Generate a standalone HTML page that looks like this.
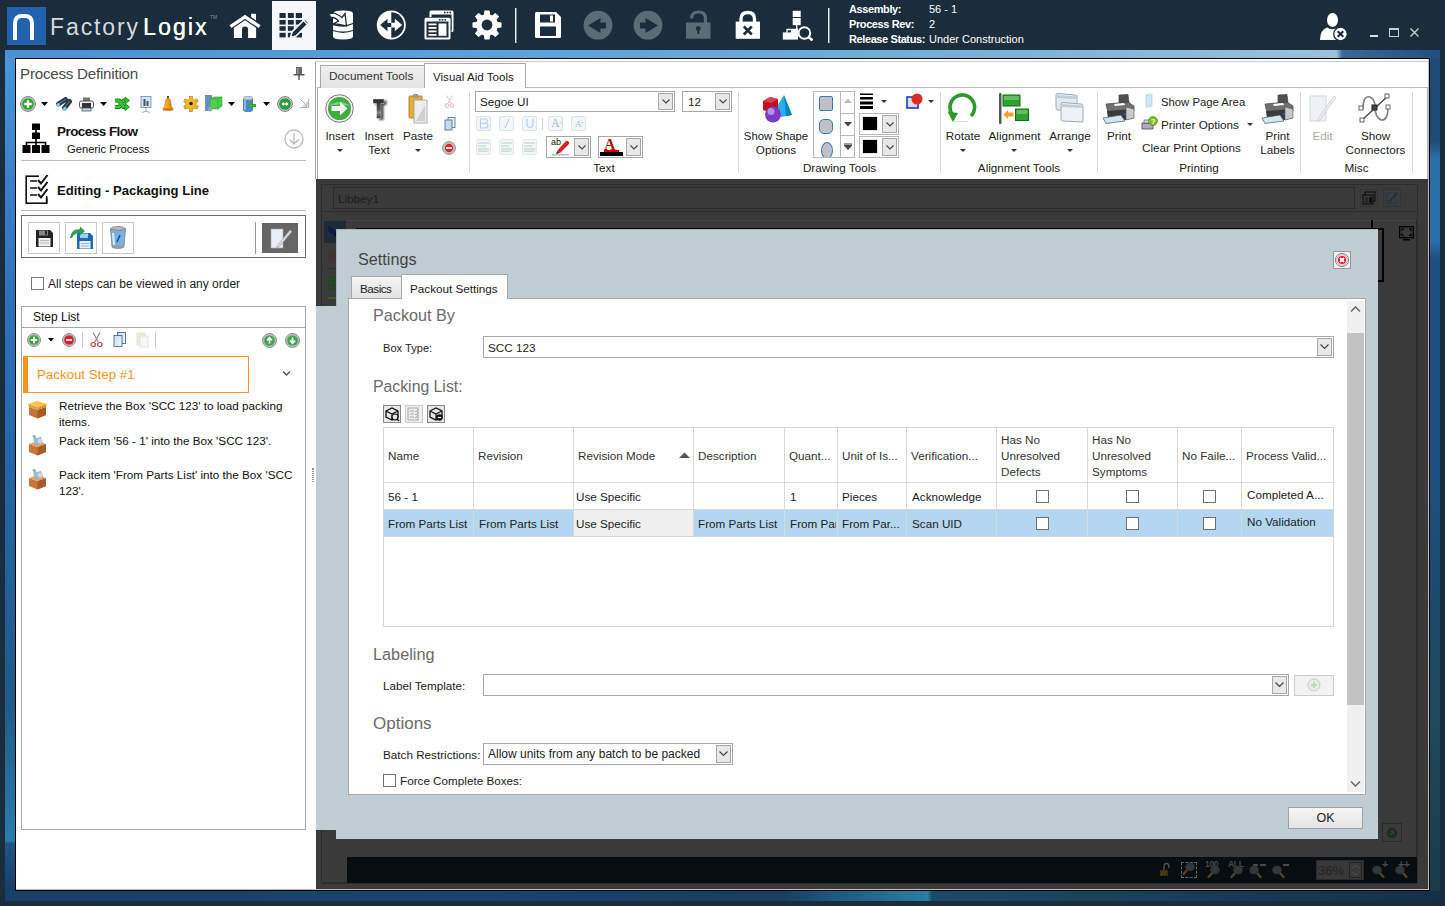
<!DOCTYPE html>
<html><head><meta charset="utf-8">
<style>
*{box-sizing:border-box;margin:0;padding:0}
html,body{width:1445px;height:906px;overflow:hidden;background:#1b2d3c;font-family:"Liberation Sans",sans-serif;font-size:12px;color:#000}
.a{position:absolute}
.t{position:absolute;white-space:nowrap}
</style></head><body>
<!-- blue frame -->
<div class="a" style="left:5px;top:50px;width:1435px;height:851px;background:#1e5585"></div>
<div class="a" style="left:5px;top:50px;width:1435px;height:8px;background:linear-gradient(90deg,#4a90d6 0%,#58a0de 30%,#66a8da 50%,#7ab2d8 70%,#9cc0dc 92.8%,#3a6a98 93.2%,#1f4f80 100%)"></div>
<div class="a" style="left:5px;top:58px;width:10px;height:833px;background:linear-gradient(180deg,#4a96d8 0%,#3a80c8 15%,#2e70b8 30%,#2565a5 50%,#1f5a8a 77%,#2a78a8 92.5%,#2a7aaa 94%,#1e5585 94.3%,#173f68 100%)"></div>
<div class="a" style="left:5px;top:891px;width:1435px;height:10px;background:linear-gradient(90deg,#163f6a 0%,#174470 30%,#173e5e 54%,#1e5a80 58%,#2a7aa0 64%,#2c7ea4 64.3%,#1a4a68 64.6%,#17405a 80%,#143048 100%)"></div>
<div class="a" style="left:1430px;top:58px;width:10px;height:833px;background:linear-gradient(180deg,#1f4a78 0%,#1f4a78 10%,#2a70a8 12%,#2a70a8 22%,#1c5080 24%,#1c5080 50%,#1a4a6a 65%,#1e4a5a 80%,#1a3a48 100%)"></div>
<!-- window border -->
<div class="a" style="left:15px;top:58px;width:1415px;height:833px;border:1px solid #000;background:#fff"></div>
<div class="a" style="left:1428px;top:59px;width:1px;height:831px;background:#bbb"></div>
<div class="a" style="left:16px;top:889px;width:1413px;height:1px;background:#bbb"></div>


<!-- LEFT PANEL -->
<div id="left" class="a" style="left:16px;top:59px;width:299px;height:830px;background:#fff"></div>
<div class="t" style="left:20px;top:64px;font-size:15.2px;line-height:20px;color:#4a4a4a;letter-spacing:-0.25px">Process Definition</div>
<svg class="a" style="left:293px;top:67px" width="12" height="14"><rect x="3" y="0" width="6" height="7" fill="#666"/><rect x="4" y="1" width="1.5" height="6" fill="#999"/><rect x="0.5" y="7" width="11" height="1.5" fill="#555"/><rect x="5.3" y="8" width="1.4" height="5" fill="#555"/></svg>
<!-- toolbar row -->
<svg class="a" style="left:20px;top:96px" width="16" height="16"><circle cx="8.0" cy="8.0" r="7.4" fill="#f6f6f6" stroke="#6a6a6a" stroke-width="0.9"/><circle cx="8.0" cy="8.0" r="6.2" fill="none" stroke="#8a8a8a" stroke-width="0.7"/><circle cx="8.0" cy="8.0" r="5.85" fill="#30a830"/><path d="M8 4.3 V11.7 M4.3 8 H11.7" stroke="#fff" stroke-width="2.3"/></svg>
<svg class="a" style="left:41px;top:102px" width="7" height="4"><path d="M0 0 H7 L3.5 4Z" fill="#000"/></svg>
<svg class="a" style="left:55px;top:97px" width="17" height="14"><path d="M3.5 7 L10.5 2.5 M9.5 11 L14.5 4.5" stroke="#2e3c48" stroke-width="5" stroke-linecap="round"/><path d="M3.5 7 L10.5 2.5 M9.5 11 L14.5 4.5" stroke="#5a6a78" stroke-width="1.2" stroke-linecap="round"/><ellipse cx="3" cy="8" rx="2.1" ry="1.6" fill="#80ccf4" transform="rotate(-35 3 8)"/><ellipse cx="9.5" cy="11.8" rx="2.3" ry="1.6" fill="#80ccf4" transform="rotate(-45 9.5 11.8)"/></svg>
<svg class="a" style="left:79px;top:97px" width="15" height="15"><rect x="4" y="0.5" width="7" height="4" fill="#777"/><rect x="0.5" y="4" width="14" height="7" rx="1.5" fill="#eee" stroke="#555"/><rect x="3" y="6" width="9" height="5" fill="#333"/><rect x="3" y="11" width="9" height="3" fill="#bde" stroke="#555" stroke-width="0.8"/></svg>
<svg class="a" style="left:100px;top:102px" width="7" height="4"><path d="M0 0 H7 L3.5 4Z" fill="#000"/></svg>
<svg class="a" style="left:114px;top:96px" width="16" height="16"><g fill="none" stroke-linejoin="round"><path d="M1 4.5 H5 L9.5 11 H12 M1 11 H5 L6 9.5 M8 6 L9.5 4.5 H12" stroke="#158a15" stroke-width="4.2"/><path d="M1 4.5 H5 L9.5 11 H12 M1 11 H5 L6 9.5 M8 6 L9.5 4.5 H12" stroke="#3cc83c" stroke-width="2.2"/></g><path d="M11 1 L15.5 4.5 L11 8Z M11 7.5 L15.5 11 L11 14.5Z" fill="#3cc83c" stroke="#158a15" stroke-width="0.9"/></svg>
<svg class="a" style="left:140px;top:96px" width="12" height="17"><rect x="1" y="0.5" width="10" height="11" fill="#d7e6f5" stroke="#6a8ab0" stroke-width="0.8"/><rect x="3.5" y="3" width="2" height="7" fill="#456"/><rect x="6.5" y="5" width="2" height="5" fill="#456"/><path d="M6 11.5 V15 L2.5 16.5 M6 15 L9.5 16.5" stroke="#888" stroke-width="0.8" fill="none"/></svg>
<svg class="a" style="left:162px;top:96px" width="12" height="16"><defs><linearGradient id="bellg" x1="0" x2="1"><stop offset="0" stop-color="#f8d040"/><stop offset="0.5" stop-color="#f5a020"/><stop offset="1" stop-color="#d06a10"/></linearGradient></defs><rect x="5" y="0" width="2" height="3" fill="#7a4a20"/><path d="M6 2.5 Q3.3 2.5 3.3 6.5 Q3.3 10.5 1 13 H11 Q8.7 10.5 8.7 6.5 Q8.7 2.5 6 2.5Z" fill="url(#bellg)" stroke="#b86a10" stroke-width="0.6"/><ellipse cx="6" cy="13.5" rx="5.5" ry="1.3" fill="#d87018"/></svg>
<svg class="a" style="left:183px;top:96px" width="16" height="16" viewBox="-8 -8 16 16"><g fill="#f0b020" stroke="#b07a10" stroke-width="0.6"><circle r="5.2"/><rect x="-1.6" y="-7.6" width="3.2" height="3.5"/><rect x="-1.6" y="-7.6" width="3.2" height="3.5" transform="rotate(60)"/><rect x="-1.6" y="-7.6" width="3.2" height="3.5" transform="rotate(120)"/><rect x="-1.6" y="-7.6" width="3.2" height="3.5" transform="rotate(180)"/><rect x="-1.6" y="-7.6" width="3.2" height="3.5" transform="rotate(240)"/><rect x="-1.6" y="-7.6" width="3.2" height="3.5" transform="rotate(300)"/></g><circle r="5" fill="#f5b82a"/><circle cx="0" cy="-0.5" r="1.8" fill="#222"/></svg>
<svg class="a" style="left:205px;top:95px" width="18" height="17"><rect x="0.5" y="0.5" width="6" height="15" fill="#6a8fc8" stroke="#4a6a9a" stroke-width="0.6"/><path d="M5 4 L9 2 H17 V11 L13 14 H5Z" fill="#50d050" stroke="#2a9a2a" stroke-width="0.6"/><path d="M5 4 H13 V14 M13 4 L17 2" fill="none" stroke="#2a9a2a" stroke-width="0.6"/><ellipse cx="5" cy="14" rx="2" ry="2.5" fill="#8aa" /></svg>
<svg class="a" style="left:228px;top:102px" width="7" height="4"><path d="M0 0 H7 L3.5 4Z" fill="#000"/></svg>
<svg class="a" style="left:242px;top:96px" width="15" height="16"><path d="M1 2 Q1 0 6 0 Q11 0 11 2 V14 Q11 16 6 16 Q1 16 1 14Z" fill="#4a8ac8"/><ellipse cx="6" cy="2" rx="5" ry="1.8" fill="#ccc"/><rect x="2" y="4" width="2" height="10" fill="#9cc8f0" opacity="0.7"/><path d="M6 9 L11 6 V8 H14 V11 H11 V13Z" fill="#30b030"/></svg>
<svg class="a" style="left:263px;top:102px" width="7" height="4"><path d="M0 0 H7 L3.5 4Z" fill="#000"/></svg>
<svg class="a" style="left:277px;top:96px" width="16" height="16"><circle cx="8.0" cy="8.0" r="7.4" fill="#f6f6f6" stroke="#6a6a6a" stroke-width="0.9"/><circle cx="8.0" cy="8.0" r="6.2" fill="none" stroke="#8a8a8a" stroke-width="0.7"/><circle cx="8.0" cy="8.0" r="5.85" fill="#2a9a3a"/><path d="M4.5 8 L6.8 5.7 V7.2 H9.2 V5.7 L11.5 8 L9.2 10.3 V8.8 H6.8 V10.3Z" fill="#fff"/></svg>
<svg class="a" style="left:299px;top:98px" width="10" height="10"><path d="M9.5 1 V9.5 H1 M1.5 1.5 L8 8 M4 8 H8 V4" fill="none" stroke="#999" stroke-width="0.8"/></svg>
<!-- process flow -->
<svg class="a" style="left:22px;top:123px" width="30" height="31"><rect x="10" y="0.5" width="8" height="6.5" rx="0.6" fill="#000"/><rect x="10" y="9.5" width="8" height="6.5" rx="0.6" fill="#000"/><path d="M14 6 V10 M14 15 V20 M4.5 23 V19.5 H23.5 V23 M14 19 V23" stroke="#000" stroke-width="1.6" fill="none"/><rect x="0.5" y="22" width="8" height="8" rx="0.6" fill="#000"/><rect x="10" y="22" width="8" height="8" rx="0.6" fill="#000"/><rect x="19.5" y="22" width="8" height="8" rx="0.6" fill="#000"/></svg>
<div class="t" style="left:57px;top:123px;font-size:13.5px;line-height:17px;font-weight:bold;letter-spacing:-0.55px;color:#111">Process Flow</div>
<div class="t" style="left:67px;top:142px;font-size:11.2px;line-height:15px;color:#111">Generic Process</div>
<svg class="a" style="left:284px;top:129px" width="20" height="20"><circle cx="10" cy="10" r="9" fill="none" stroke="#bbb" stroke-width="1.3"/><path d="M10 4 V15 M5.5 10.5 L10 15 L14.5 10.5" fill="none" stroke="#bbb" stroke-width="1.3"/></svg>
<div class="a" style="left:21px;top:160px;width:285px;height:1px;background:#b8b8b8"></div>
<!-- editing -->
<svg class="a" style="left:25px;top:174px" width="28" height="31"><rect x="1.2" y="2.2" width="20.5" height="27" fill="none" stroke="#111" stroke-width="1.6"/><rect x="14" y="0" width="14" height="24" fill="#fff"/><path d="M21.7 22 V29" stroke="#111" stroke-width="1.6"/><path d="M5 7 H12 M5 14 H12 M5 21 H12" stroke="#111" stroke-width="1.4"/><path d="M13 6 L16 9.5 L22.5 1 M13 13 L16 16.5 L22.5 8 M13 20 L16 23.5 L22.5 15" fill="none" stroke="#111" stroke-width="2"/></svg>
<div class="t" style="left:57px;top:182px;font-size:13.1px;line-height:17px;font-weight:bold;color:#111;letter-spacing:0px">Editing - Packaging Line</div>
<div class="a" style="left:21px;top:210px;width:285px;height:1px;background:#b8b8b8"></div>
<!-- button group -->
<div class="a" style="left:21px;top:215px;width:285px;height:43px;border:1px solid #6a6a6a"></div>
<div class="a" style="left:28px;top:222px;width:32px;height:32px;border:1px solid #c8c8c8;background:#fff"></div>
<div class="a" style="left:65px;top:222px;width:32px;height:32px;border:1px solid #c8c8c8;background:#fff"></div>
<div class="a" style="left:102px;top:222px;width:32px;height:32px;border:1px solid #c8c8c8;background:#fff"></div>
<svg class="a" style="left:35px;top:229px" width="19" height="19"><path d="M1 1 H15 L18 4 V18 H1Z" fill="#222"/><rect x="4" y="1.5" width="9" height="5" fill="#888"/><rect x="10" y="2" width="2" height="3.5" fill="#222"/><rect x="3.5" y="9" width="12" height="8.5" fill="#f0f0f0"/><path d="M5 11.5 H14 M5 14 H14" stroke="#aaa" stroke-width="0.8"/></svg>
<svg class="a" style="left:68px;top:226px" width="28" height="25"><path d="M9 7 H22 L25 10 V23 H9Z" fill="#1a6bb5"/><rect x="12" y="7.5" width="8" height="4.5" fill="#9fd0f5"/><rect x="11.5" y="15" width="11" height="7.5" fill="#eef"/><path d="M13 17.5 H21 M13 20 H21" stroke="#7aa" stroke-width="0.8"/><path d="M2 12 Q3 3 12 3 V0.5 L17 5 L12 9.5 V7 Q6 7 4 12Z" fill="#2ea04a"/></svg>
<svg class="a" style="left:109px;top:226px" width="18" height="24"><ellipse cx="9" cy="3" rx="7.5" ry="2.5" fill="#bbb" stroke="#777" stroke-width="0.7"/><path d="M1.5 3 L3 21 Q9 24 15 21 L16.5 3 Q9 6 1.5 3Z" fill="#7ab0e0" stroke="#777" stroke-width="0.7"/><path d="M4 7 L5 19" stroke="#d8ecfa" stroke-width="2"/><path d="M8 16 L11 9" stroke="#1a4a9a" stroke-width="1.5"/><ellipse cx="9" cy="21" rx="6" ry="1.8" fill="#999"/></svg>
<div class="a" style="left:255px;top:222px;width:1px;height:32px;background:#999"></div>
<div class="a" style="left:262px;top:223px;width:36px;height:30px;background:#666"></div>
<svg class="a" style="left:268px;top:227px" width="26" height="22"><path d="M3 2 H15 V21 H3Z" fill="#e8eef5" stroke="#aab" stroke-width="0.6"/><path d="M9 19 L22 3 L24 4.5 L11 20 L8.5 21Z" fill="#ddd" stroke="#999" stroke-width="0.6"/></svg>
<!-- checkbox -->
<div class="a" style="left:31px;top:277px;width:13px;height:13px;border:1px solid #777;background:#fff"></div>
<div class="t" style="left:48px;top:277px;font-size:12px;line-height:15px;color:#222">All steps can be viewed in any order</div>
<!-- step list -->
<div class="a" style="left:21px;top:306px;width:285px;height:524px;border:1px solid #a8a8a8;background:#fff"></div>
<div class="a" style="left:22px;top:327px;width:283px;height:1px;background:#a8a8a8"></div>
<div class="t" style="left:33px;top:309px;font-size:12px;line-height:16px;color:#111">Step List</div>
<svg class="a" style="left:27px;top:333px" width="14" height="14"><circle cx="7.0" cy="7.0" r="6.4" fill="#f6f6f6" stroke="#6a6a6a" stroke-width="0.9"/><circle cx="7.0" cy="7.0" r="5.2" fill="none" stroke="#8a8a8a" stroke-width="0.7"/><circle cx="7.0" cy="7.0" r="4.85" fill="#30a830"/><path d="M7 3.8 V10.2 M3.8 7 H10.2" stroke="#fff" stroke-width="2"/></svg>
<svg class="a" style="left:48px;top:338px" width="6" height="4"><path d="M0 0 H6 L3 3.5Z" fill="#000"/></svg>
<svg class="a" style="left:62px;top:333px" width="14" height="14"><circle cx="7.0" cy="7.0" r="6.4" fill="#f6f6f6" stroke="#6a6a6a" stroke-width="0.9"/><circle cx="7.0" cy="7.0" r="5.2" fill="none" stroke="#8a8a8a" stroke-width="0.7"/><circle cx="7.0" cy="7.0" r="4.85" fill="#e01e30"/><path d="M4 7 H10" stroke="#fff" stroke-width="1.8"/></svg>
<div class="a" style="left:82px;top:332px;width:1px;height:16px;background:#ccc"></div>
<svg class="a" style="left:90px;top:332px" width="13" height="16"><path d="M3 0.5 L8.3 10 M10 0.5 L4.7 10" stroke="#8a8a8a" stroke-width="1.2"/><ellipse cx="3.2" cy="12.5" rx="2.2" ry="2" fill="none" stroke="#c04040" stroke-width="1.2"/><ellipse cx="9.8" cy="12.5" rx="2.2" ry="2" fill="none" stroke="#c04040" stroke-width="1.2"/></svg>
<svg class="a" style="left:113px;top:332px" width="14" height="16"><defs><linearGradient id="cpg" x1="0" y1="0" x2="1" y2="1"><stop offset="0" stop-color="#c8e0f0"/><stop offset="1" stop-color="#f0f6fa"/></linearGradient></defs><rect x="4.5" y="0.5" width="8" height="11" fill="url(#cpg)" stroke="#4a6a8a" stroke-width="0.9"/><rect x="1" y="3.5" width="8" height="11" fill="url(#cpg)" stroke="#4a6a8a" stroke-width="0.9"/></svg>
<svg class="a" style="left:136px;top:332px" width="13" height="16"><rect x="1" y="1" width="8" height="12" fill="#f5ebd0" stroke="#ddd" stroke-width="0.8"/><rect x="4" y="4" width="8" height="11" fill="#f8f8f8" stroke="#ddd" stroke-width="0.8"/></svg>
<div class="a" style="left:155px;top:332px;width:1px;height:16px;background:#ccc"></div>
<svg class="a" style="left:262px;top:333px" width="15" height="15"><circle cx="7.5" cy="7.5" r="6.9" fill="#f6f6f6" stroke="#6a6a6a" stroke-width="0.9"/><circle cx="7.5" cy="7.5" r="5.7" fill="none" stroke="#8a8a8a" stroke-width="0.7"/><circle cx="7.5" cy="7.5" r="5.35" fill="#3aa64a"/><path d="M7.5 10.5 V4.8 M5 7.3 L7.5 4.8 L10 7.3" stroke="#fff" stroke-width="1.7" fill="none"/></svg>
<svg class="a" style="left:285px;top:333px" width="15" height="15"><circle cx="7.5" cy="7.5" r="6.9" fill="#f6f6f6" stroke="#6a6a6a" stroke-width="0.9"/><circle cx="7.5" cy="7.5" r="5.7" fill="none" stroke="#8a8a8a" stroke-width="0.7"/><circle cx="7.5" cy="7.5" r="5.35" fill="#3aa64a"/><path d="M7.5 4.5 V10.2 M5 7.7 L7.5 10.2 L10 7.7" stroke="#fff" stroke-width="1.7" fill="none"/></svg>
<!-- packout step -->
<div class="a" style="left:23px;top:356px;width:226px;height:37px;border:1px solid #f7941d;border-left:5px solid #f7941d;background:#fff"></div>
<div class="t" style="left:37px;top:366px;font-size:13.3px;line-height:17px;color:#f7941d">Packout Step #1</div>
<svg class="a" style="left:282px;top:370px" width="9" height="7"><path d="M1 1.5 L4.5 5 L8 1.5" fill="none" stroke="#555" stroke-width="1.5"/></svg>
<svg class="a" style="left:27px;top:400px" width="21" height="19"><path d="M2 7 L10.5 10 L19 7 V15 L10.5 18.5 L2 15Z" fill="#c8743a"/><path d="M10.5 10 V18.5 L19 15 V7Z" fill="#a85a28"/><path d="M1 4 L10 1 L20 4 L11 7.5Z" fill="#f6c54a"/><path d="M1 4 L2 7 L10.5 10 L11 7.5Z" fill="#e0a030"/><path d="M20 4 L19 7 L10.5 10 L11 7.5Z" fill="#d89028"/></svg><div class="t" style="left:59px;top:398px;font-size:11.7px;line-height:15.5px;color:#111">Retrieve the Box 'SCC 123' to load packing<br>items.</div>
<svg class="a" style="left:27px;top:435px" width="21" height="21"><path d="M2 9 L10.5 12 L19 9 V17 L10.5 20.5 L2 17Z" fill="#c8743a"/><path d="M10.5 12 V20.5 L19 17 V9Z" fill="#a85a28"/><path d="M2 9 L10.5 6 L19 9 L10.5 12Z" fill="#e0a060"/><path d="M6 1 L9 3 L14 2 L16 8 L10 10 L7 8Z" fill="#9ab8d0"/><path d="M5 1 L8 0 L9 3Z" fill="#5a8"/><circle cx="13" cy="6" r="2.5" fill="#c8d8e8"/></svg><div class="t" style="left:59px;top:433px;font-size:11.7px;line-height:15.5px;color:#111">Pack item '56 - 1' into the Box 'SCC 123'.</div>
<svg class="a" style="left:27px;top:469px" width="21" height="21"><path d="M2 9 L10.5 12 L19 9 V17 L10.5 20.5 L2 17Z" fill="#c8743a"/><path d="M10.5 12 V20.5 L19 17 V9Z" fill="#a85a28"/><path d="M2 9 L10.5 6 L19 9 L10.5 12Z" fill="#e0a060"/><path d="M6 1 L9 3 L14 2 L16 8 L10 10 L7 8Z" fill="#9ab8d0"/><path d="M5 1 L8 0 L9 3Z" fill="#5a8"/><circle cx="13" cy="6" r="2.5" fill="#c8d8e8"/></svg><div class="t" style="left:59px;top:467px;font-size:11.7px;line-height:15.5px;color:#111">Pack item 'From Parts List' into the Box 'SCC<br>123'.</div>
<div class="a" style="left:312px;top:468px;width:2px;height:14px;border-left:1px dotted #999;border-right:1px dotted #999"></div>
<!-- RIGHT AREA -->

<!-- RIBBON -->
<div id="ribbon" class="a" style="left:315px;top:61px;width:1113px;height:118px;border-left:1px solid #a8a8a8;border-top:1px solid #c8c8c8;background:#fff"></div>
<div class="a" style="left:317px;top:87px;width:1111px;height:92px;border-left:1px solid #a8a8a8;border-top:1px solid #b8b8b8;background:#fff"></div>
<div class="a" style="left:320px;top:65px;width:105px;height:23px;border:1px solid #a8a8a8;border-bottom:none;background:linear-gradient(#efefef,#e4e4e4)"></div>
<div class="t" style="left:329px;top:69px;font-size:11.8px;line-height:15px;color:#333">Document Tools</div>
<div class="a" style="left:424px;top:63px;width:102px;height:25px;border:1px solid #a8a8a8;border-bottom:none;background:#fff"></div>
<div class="t" style="left:433px;top:69px;font-size:11.6px;line-height:15px;color:#222">Visual Aid Tools</div>
<!-- insert -->
<svg class="a" style="left:325px;top:94px" width="29" height="29"><circle cx="14.5" cy="14.5" r="13.8" fill="#f2f2f2" stroke="#777" stroke-width="1"/><circle cx="14.5" cy="14.5" r="11.5" fill="#3fae3f"/><path d="M3.5 12 Q14.5 4 25.5 12 Q14.5 9 3.5 12Z" fill="#8ed88e" opacity="0.8"/><path d="M6.5 12 H15 V7.5 L22.5 14.5 L15 21.5 V17 H6.5Z" fill="#f4f4f4"/></svg>
<div class="t" style="left:280px;top:129px;width:120px;text-align:center;font-size:11.7px;line-height:14px;color:#222">Insert</div>
<svg class="a" style="left:337px;top:149px" width="6" height="4"><path d="M0 0 H6 L3 3Z" fill="#333"/></svg>
<svg class="a" style="left:372px;top:97px" width="20" height="27"><defs><filter id="tblur" x="-50%" y="-50%" width="200%" height="200%"><feGaussianBlur stdDeviation="1.3"/></filter><linearGradient id="tg" x1="0" y1="0" x2="0" y2="1"><stop offset="0" stop-color="#2a2a2a"/><stop offset="0.55" stop-color="#555"/><stop offset="0.7" stop-color="#888"/><stop offset="1" stop-color="#333"/></linearGradient></defs><path d="M3.5 3.5 H14.5 V8 H11.5 V23 H7 V8 H3.5Z" fill="#000" opacity="0.75" filter="url(#tblur)"/><path d="M1 2 H12 V6.5 H9 V21.5 H4.5 V6.5 H1Z" fill="url(#tg)" stroke="#fff" stroke-width="0.4"/></svg>
<div class="t" style="left:319px;top:129px;width:120px;text-align:center;font-size:11.7px;line-height:14px;color:#222">Insert</div>
<div class="t" style="left:319px;top:143px;width:120px;text-align:center;font-size:11.7px;line-height:14px;color:#222">Text</div>
<svg class="a" style="left:408px;top:93px" width="20" height="31"><rect x="1" y="3" width="13" height="22" rx="1" fill="#e8b030" stroke="#a07010" stroke-width="0.8"/><rect x="5" y="1" width="5" height="4" fill="#999"/><path d="M6 7 H19 V30 H6Z" fill="#eee" stroke="#999" stroke-width="0.8"/><path d="M8 28 L17 12 V28Z" fill="#d0d0d0"/></svg>
<div class="t" style="left:358px;top:129px;width:120px;text-align:center;font-size:11.7px;line-height:14px;color:#222">Paste</div>
<svg class="a" style="left:415px;top:149px" width="6" height="4"><path d="M0 0 H6 L3 3Z" fill="#333"/></svg>
<svg class="a" style="left:444px;top:95px" width="11" height="13"><path d="M2.5 0.5 L7 8.3 M8.5 0.5 L4 8.3" stroke="#c4c4c4" stroke-width="0.9"/><circle cx="3" cy="10.5" r="1.8" fill="none" stroke="#e0a0a0" stroke-width="0.8"/><circle cx="8" cy="10.5" r="1.8" fill="none" stroke="#e0a0a0" stroke-width="0.8"/></svg>
<svg class="a" style="left:444px;top:117px" width="12" height="14"><rect x="4" y="0.5" width="7" height="10" fill="#e0ecf6" stroke="#5a7a9a" stroke-width="0.9"/><rect x="1" y="3" width="7" height="10" fill="#c5d8ec" stroke="#5a7a9a" stroke-width="0.9"/></svg>
<svg class="a" style="left:442px;top:141px" width="14" height="14"><circle cx="7" cy="7" r="6.3" fill="#f4f4f4" stroke="#777" stroke-width="1"/><circle cx="7" cy="7" r="5" fill="none" stroke="#888" stroke-width="0.7"/><circle cx="7" cy="7" r="4.2" fill="#e01e30"/><path d="M4 7 H10" stroke="#fff" stroke-width="1.8"/></svg>
<div class="a" style="left:469px;top:92px;width:1px;height:81px;background:#d8d8d8"></div>
<!-- text group -->
<div class="a" style="left:475px;top:91px;width:200px;height:21px;border:1px solid #a8a8a8;background:#fff"></div>
<div class="t" style="left:480px;top:94px;font-size:11.7px;line-height:15px;color:#222">Segoe UI</div>
<div class="a" style="left:658px;top:93px;width:15px;height:17px;border:1px solid #a8a8a8;background:#e8e8e8"></div><svg class="a" style="left:661.5px;top:99.0px" width="8" height="5"><path d="M0.5 0.5 L4 4 L7.5 0.5" fill="none" stroke="#444" stroke-width="1.1"/></svg>
<div class="a" style="left:682px;top:91px;width:50px;height:21px;border:1px solid #a8a8a8;background:#fff"></div>
<div class="t" style="left:688px;top:94px;font-size:11.7px;line-height:15px;color:#222">12</div>
<div class="a" style="left:715px;top:93px;width:15px;height:17px;border:1px solid #a8a8a8;background:#e8e8e8"></div><svg class="a" style="left:718.5px;top:99.0px" width="8" height="5"><path d="M0.5 0.5 L4 4 L7.5 0.5" fill="none" stroke="#444" stroke-width="1.1"/></svg>
<div class="a" style="left:476px;top:116px;width:15px;height:15px;border:1px solid #dde3ea;border-radius:2px;background:#f4f7fa"></div>
<div class="a" style="left:499px;top:116px;width:15px;height:15px;border:1px solid #dde3ea;border-radius:2px;background:#f4f7fa"></div>
<div class="a" style="left:522px;top:116px;width:15px;height:15px;border:1px solid #dde3ea;border-radius:2px;background:#f4f7fa"></div>
<div class="a" style="left:548px;top:116px;width:15px;height:15px;border:1px solid #dde3ea;border-radius:2px;background:#f4f7fa"></div>
<div class="a" style="left:571px;top:116px;width:15px;height:15px;border:1px solid #dde3ea;border-radius:2px;background:#f4f7fa"></div>
<svg class="a" style="left:479px;top:118px" width="10" height="11"><path d="M1.5 1 H6 Q8.5 1 8.5 3 Q8.5 5 6 5.2 Q9 5.5 9 7.7 Q9 10 6 10 H1.5Z M1.5 5.2 H6" fill="none" stroke="#b4cceb" stroke-width="1.1"/></svg>
<svg class="a" style="left:502px;top:118px" width="10" height="11"><path d="M7 1 L3 10" stroke="#b4cceb" stroke-width="1.1"/></svg>
<svg class="a" style="left:525px;top:118px" width="10" height="11"><path d="M2 1 V6 Q2 9.5 5 9.5 Q8 9.5 8 6 V1" fill="none" stroke="#b4cceb" stroke-width="1.2"/></svg>
<div class="a" style="left:542px;top:118px;width:1px;height:12px;background:#ccc"></div>
<div class="t" style="left:551px;top:116px;font-size:12px;line-height:14px;color:#a8b4c0;font-family:'Liberation Serif',serif">A<span style="font-size:6px;vertical-align:top">^</span></div>
<div class="t" style="left:575px;top:118px;font-size:9px;line-height:12px;color:#a8b4c0;font-family:'Liberation Serif',serif">A<span style="font-size:6px;vertical-align:top">ˇ</span></div>
<div class="a" style="left:476px;top:139px;width:15px;height:16px;border:1px solid #e3e8e3;border-radius:2px;background:#f4f7f4"></div>
<svg class="a" style="left:478px;top:142px" width="11" height="10"><path d="M0 1 H11 M0 4 H8 M0 7 H11 M0 9.5 H9" stroke="#b8cce0" stroke-width="1"/><rect x="0" y="6" width="11" height="4" fill="#cfe6cf" opacity="0.6"/></svg>
<div class="a" style="left:499px;top:139px;width:15px;height:16px;border:1px solid #e3e8e3;border-radius:2px;background:#f4f7f4"></div>
<svg class="a" style="left:501px;top:142px" width="11" height="10"><path d="M0 1 H11 M0 4 H8 M0 7 H11 M0 9.5 H9" stroke="#b8cce0" stroke-width="1"/><rect x="0" y="6" width="11" height="4" fill="#cfe6cf" opacity="0.6"/></svg>
<div class="a" style="left:522px;top:139px;width:15px;height:16px;border:1px solid #e3e8e3;border-radius:2px;background:#f4f7f4"></div>
<svg class="a" style="left:524px;top:142px" width="11" height="10"><path d="M0 1 H11 M0 4 H8 M0 7 H11 M0 9.5 H9" stroke="#b8cce0" stroke-width="1"/><rect x="0" y="6" width="11" height="4" fill="#cfe6cf" opacity="0.6"/></svg>
<div class="a" style="left:546px;top:136px;width:45px;height:22px;border:1px solid #a8a8a8;background:#fff"></div>
<div class="t" style="left:551px;top:137px;font-size:9px;line-height:10px;color:#111">ab</div>
<svg class="a" style="left:551px;top:139px" width="20" height="17"><path d="M6 12 L14 3 Q16 1 17.5 2.5 Q19 4 17 6 L9 14Z" fill="#e02020"/><path d="M6 12 L9 14 L5 15Z" fill="#333"/><rect x="1" y="15" width="17" height="1.5" fill="#bbb"/></svg>
<div class="a" style="left:574px;top:138px;width:15px;height:18px;border:1px solid #a8a8a8;background:#e8e8e8"></div><svg class="a" style="left:577.5px;top:144.5px" width="8" height="5"><path d="M0.5 0.5 L4 4 L7.5 0.5" fill="none" stroke="#444" stroke-width="1.1"/></svg>
<div class="a" style="left:598px;top:136px;width:45px;height:22px;border:1px solid #a8a8a8;background:#fff"></div>
<div class="t" style="left:604px;top:137px;font-size:16px;line-height:16px;color:#b01010;font-weight:bold;font-family:'Liberation Serif',serif">A</div>
<div class="a" style="left:600px;top:152px;width:23px;height:4px;background:#000"></div>
<div class="a" style="left:604px;top:150px;width:15px;height:2px;background:#c00"></div>
<div class="a" style="left:626px;top:138px;width:15px;height:18px;border:1px solid #a8a8a8;background:#e8e8e8"></div><svg class="a" style="left:629.5px;top:144.5px" width="8" height="5"><path d="M0.5 0.5 L4 4 L7.5 0.5" fill="none" stroke="#444" stroke-width="1.1"/></svg>
<div class="t" style="left:544px;top:161px;width:120px;text-align:center;font-size:11.7px;line-height:14px;color:#222">Text</div>
<div class="a" style="left:738px;top:92px;width:1px;height:81px;background:#d8d8d8"></div>
<svg class="a" style="left:761px;top:95px" width="32" height="29"><path d="M14 14 L23 0 L31 20 L20 22Z" fill="#2ab0e8"/><path d="M23 0 L31 20 L25 21Z" fill="#1080c0"/><path d="M2 6 L9 2 L17 4 V14 L10 18 L2 15Z" fill="#c01020"/><path d="M2 6 L9 2 L17 4 L10 8Z" fill="#e04050"/><circle cx="12" cy="19.5" r="8" fill="#7a3ac8"/><circle cx="10" cy="16.5" r="3.5" fill="#c8a8f0" opacity="0.8"/></svg>
<div class="t" style="left:716px;top:129px;width:120px;text-align:center;font-size:11.35px;line-height:14px;color:#222">Show Shape</div>
<div class="t" style="left:716px;top:143px;width:120px;text-align:center;font-size:11.7px;line-height:14px;color:#222">Options</div>
<div class="a" style="left:813px;top:91px;width:42px;height:67px;border:1px solid #b8b8b8;background:#fff"></div>
<div class="a" style="left:840px;top:91px;width:1px;height:67px;background:#b8b8b8"></div>
<div class="a" style="left:840px;top:113px;width:15px;height:1px;background:#b8b8b8"></div>
<div class="a" style="left:840px;top:135px;width:15px;height:1px;background:#b8b8b8"></div>
<div class="a" style="left:819px;top:96px;width:14px;height:15px;border:1.5px solid #3a78c0;border-radius:2px;background:#c0c0c8"></div>
<div class="a" style="left:819px;top:119px;width:14px;height:15px;border:1.5px solid #3a78c0;border-radius:5px;background:#c0c0c8"></div>
<div class="a" style="left:814px;top:136px;width:26px;height:21px;overflow:hidden"><div class="a" style="left:7px;top:6px;width:12px;height:17px;border:1.5px solid #3a78c0;border-radius:50%;background:#c0c0c8"></div></div>
<svg class="a" style="left:844px;top:98px" width="8" height="5"><path d="M0 5 L4 0.5 L8 5Z" fill="#bbb"/></svg>
<svg class="a" style="left:844px;top:122px" width="8" height="5"><path d="M0 0 H8 L4 4.5Z" fill="#444"/></svg>
<svg class="a" style="left:844px;top:143px" width="8" height="7"><path d="M0 0 H8 M0 2 H8 L4 6.5Z" stroke="#444" stroke-width="1" fill="#444"/></svg>
<svg class="a" style="left:860px;top:93px" width="14" height="16"><rect x="0" y="0.5" width="13" height="1.5" fill="#000"/><rect x="0" y="4" width="13" height="2.5" fill="#000"/><rect x="0" y="8.5" width="13" height="3" fill="#000"/><rect x="0" y="13" width="13" height="3" fill="#000"/></svg>
<svg class="a" style="left:881px;top:100px" width="6" height="4"><path d="M0 0 H6 L3 3Z" fill="#333"/></svg>
<svg class="a" style="left:906px;top:93px" width="17" height="16"><rect x="1" y="4" width="11" height="11" fill="#dde" stroke="#1a40b0" stroke-width="1.6"/><circle cx="11" cy="6" r="5.5" fill="#e02a20"/></svg>
<svg class="a" style="left:928px;top:100px" width="6" height="4"><path d="M0 0 H6 L3 3Z" fill="#333"/></svg>
<div class="a" style="left:859px;top:113px;width:40px;height:22px;border:1px solid #b8b8b8;background:#fff"></div>
<div class="a" style="left:863px;top:117px;width:14px;height:13px;background:#000;box-shadow:0 0 1px #666"></div>
<div class="a" style="left:859px;top:136px;width:40px;height:22px;border:1px solid #b8b8b8;background:#fff"></div>
<div class="a" style="left:863px;top:140px;width:14px;height:13px;background:#000;box-shadow:0 0 1px #666"></div>
<div class="a" style="left:882px;top:115px;width:15px;height:18px;border:1px solid #a8a8a8;background:#e8e8e8"></div><svg class="a" style="left:885.5px;top:121.5px" width="8" height="5"><path d="M0.5 0.5 L4 4 L7.5 0.5" fill="none" stroke="#444" stroke-width="1.1"/></svg>
<div class="a" style="left:882px;top:138px;width:15px;height:18px;border:1px solid #a8a8a8;background:#e8e8e8"></div><svg class="a" style="left:885.5px;top:144.5px" width="8" height="5"><path d="M0.5 0.5 L4 4 L7.5 0.5" fill="none" stroke="#444" stroke-width="1.1"/></svg>
<div class="t" style="left:779.5px;top:161px;width:120px;text-align:center;font-size:11.7px;line-height:14px;color:#222">Drawing Tools</div>
<div class="a" style="left:940px;top:92px;width:1px;height:81px;background:#d8d8d8"></div>
<svg class="a" style="left:947px;top:93px" width="31" height="30"><path d="M4.65 20.35 A12.3 12.3 0 1 1 24 22.9" fill="none" stroke="#2a9a2a" stroke-width="3.6"/><path d="M0.5 18.5 L11 20 L6 29Z" fill="#2a9a2a"/><path d="M7 28.5 H21" stroke="#ddd" stroke-width="1"/></svg>
<div class="t" style="left:903px;top:129px;width:120px;text-align:center;font-size:11.7px;line-height:14px;color:#222">Rotate</div>
<svg class="a" style="left:960px;top:149px" width="6" height="4"><path d="M0 0 H6 L3 3Z" fill="#333"/></svg>
<svg class="a" style="left:998px;top:93px" width="32" height="31"><rect x="1" y="0" width="2.5" height="31" rx="1" fill="#555"/><rect x="5" y="2" width="17" height="11" fill="#30a030" stroke="#1a6a1a" stroke-width="1"/><rect x="6" y="3" width="15" height="4" fill="#60c060"/><rect x="17.5" y="16" width="13" height="11.5" fill="#30a030" stroke="#1a6a1a" stroke-width="1"/><rect x="18.5" y="17" width="11" height="4" fill="#60c060"/><path d="M5.5 21.5 L10 17 V19.5 H15.5 V23.5 H10 V26Z" fill="#f5a020"/></svg>
<div class="t" style="left:954.5px;top:129px;width:120px;text-align:center;font-size:11.7px;line-height:14px;color:#222">Alignment</div>
<svg class="a" style="left:1011px;top:149px" width="6" height="4"><path d="M0 0 H6 L3 3Z" fill="#333"/></svg>
<svg class="a" style="left:1055px;top:93px" width="30" height="32"><path d="M1 2 Q1 0.5 3 0.5 L20 2 Q22 2 22 4 V18 L3 17 Q1 17 1 15Z" fill="#e4ecf2" stroke="#9aaab8"/><path d="M2 2 L21 3.5 V6 L2 5Z" fill="#c0ccd8"/><path d="M6 11 Q6 9.5 8 9.5 L26 11 Q28 11 28 13 V29 L8 28 Q6 28 6 26Z" fill="#eef2f6" stroke="#9aaab8"/><path d="M7 11 L27 12.5 V15 L7 14Z" fill="#c0ccd8"/></svg>
<div class="t" style="left:1010px;top:129px;width:120px;text-align:center;font-size:11.7px;line-height:14px;color:#222">Arrange</div>
<svg class="a" style="left:1067px;top:149px" width="6" height="4"><path d="M0 0 H6 L3 3Z" fill="#333"/></svg>
<div class="t" style="left:959px;top:161px;width:120px;text-align:center;font-size:11.7px;line-height:14px;color:#222">Alignment Tools</div>
<div class="a" style="left:1097px;top:92px;width:1px;height:81px;background:#d8d8d8"></div>
<svg class="a" style="left:1102px;top:94px" width="33" height="30"><path d="M17 1 L26 0.5 L27 9 L17 9.5Z" fill="#505050" stroke="#333" stroke-width="0.6"/><path d="M4 10 L26 8 L32 12 L32 17 L6 19Z" fill="#707070" stroke="#444" stroke-width="0.7"/><path d="M12 10 L22 9 L23 11 L13 12Z" fill="#fff"/><path d="M5 17 L32 15 V24 L24 26 L6 25Z" fill="#3a3a3a"/><path d="M24 13 L32 15 V24 L24 26Z" fill="#c8c8c8" stroke="#555" stroke-width="0.6"/><circle cx="23" cy="20" r="0.9" fill="#2060ff"/><path d="M1 24 L19 21 L23 27 L4 29.5Z" fill="#cde8f0" stroke="#555" stroke-width="0.7"/></svg>
<div class="t" style="left:1059px;top:129px;width:120px;text-align:center;font-size:11.7px;line-height:14px;color:#222">Print</div>
<svg class="a" style="left:1145px;top:94px" width="10" height="14"><path d="M1 1 L7 0 V12 L1 13Z" fill="#cfe4f8" stroke="#9cc" stroke-width="0.6"/></svg>
<div class="t" style="left:1161px;top:95px;font-size:11.3px;line-height:14px;color:#222">Show Page Area</div>
<svg class="a" style="left:1141px;top:116px" width="17" height="15"><path d="M1 7 H12 V13 H1Z" fill="#aac" stroke="#446" stroke-width="0.8"/><rect x="3" y="4" width="7" height="3" fill="#ddd" stroke="#446" stroke-width="0.6"/><circle cx="12" cy="5" r="4.5" fill="#80c020" stroke="#4a7a10" stroke-width="0.6"/><text x="10" y="8" font-size="7" fill="#fff" font-family="Liberation Sans" font-weight="bold">?</text></svg>
<div class="t" style="left:1161px;top:118px;font-size:11.7px;line-height:14px;color:#222">Printer Options</div>
<svg class="a" style="left:1247px;top:123px" width="6" height="4"><path d="M0 0 H6 L3 3Z" fill="#333"/></svg>
<div class="t" style="left:1142px;top:141px;font-size:11.7px;line-height:14px;color:#222">Clear Print Options</div>
<svg class="a" style="left:1261px;top:94px" width="33" height="30"><path d="M17 1 L26 0.5 L27 9 L17 9.5Z" fill="#505050" stroke="#333" stroke-width="0.6"/><path d="M4 10 L26 8 L32 12 L32 17 L6 19Z" fill="#707070" stroke="#444" stroke-width="0.7"/><path d="M12 10 L22 9 L23 11 L13 12Z" fill="#fff"/><path d="M5 17 L32 15 V24 L24 26 L6 25Z" fill="#3a3a3a"/><path d="M24 13 L32 15 V24 L24 26Z" fill="#c8c8c8" stroke="#555" stroke-width="0.6"/><circle cx="23" cy="20" r="0.9" fill="#2060ff"/><path d="M1 24 L19 21 L23 27 L4 29.5Z" fill="#cde8f0" stroke="#555" stroke-width="0.7"/></svg>
<div class="t" style="left:1217.5px;top:129px;width:120px;text-align:center;font-size:11.7px;line-height:14px;color:#222">Print</div>
<div class="t" style="left:1217.5px;top:143px;width:120px;text-align:center;font-size:11.7px;line-height:14px;color:#222">Labels</div>
<div class="t" style="left:1139px;top:161px;width:120px;text-align:center;font-size:11.7px;line-height:14px;color:#222">Printing</div>
<div class="a" style="left:1300px;top:92px;width:1px;height:81px;background:#d8d8d8"></div>
<svg class="a" style="left:1308px;top:93px" width="29" height="30"><path d="M2 3 H18 V28 H2Z" fill="#eef2f6" stroke="#d0d8e0"/><path d="M10 26 L26 3 L28 4.5 L12 27 L9 28Z" fill="#f0f0f0" stroke="#ccc" stroke-width="0.8"/></svg>
<div class="t" style="left:1262.5px;top:129px;width:120px;text-align:center;font-size:11.7px;line-height:14px;color:#aaa">Edit</div>
<svg class="a" style="left:1358px;top:93px" width="34" height="31"><path d="M5 16 Q5 2 12 4 Q17 6 17 14 Q17 24 23 27 Q30 28 30 14" fill="none" stroke="#808080" stroke-width="1.6"/><path d="M4 27 L30 3" stroke="#444" stroke-width="1.3"/><rect x="1" y="13" width="4" height="4" fill="#fff" stroke="#666"/><rect x="28" y="12" width="4" height="4" fill="#fff" stroke="#666"/><rect x="2" y="25" width="4" height="4" fill="#fff" stroke="#666"/><rect x="27" y="1" width="4" height="4" fill="#fff" stroke="#666"/><rect x="14" y="12" width="5" height="5" fill="#444" stroke="#222"/></svg>
<div class="t" style="left:1315.5px;top:129px;width:120px;text-align:center;font-size:11.7px;line-height:14px;color:#222">Show</div>
<div class="t" style="left:1315.5px;top:143px;width:120px;text-align:center;font-size:11.7px;line-height:14px;color:#222">Connectors</div>
<div class="t" style="left:1296.5px;top:161px;width:120px;text-align:center;font-size:11.7px;line-height:14px;color:#222">Misc</div>
<div class="a" style="left:1412px;top:92px;width:1px;height:81px;background:#d8d8d8"></div>
<div class="a" style="left:1427px;top:87px;width:1px;height:92px;background:#b8b8b8"></div>
<!-- CANVAS -->
<div id="canvas" class="a" style="left:316px;top:179px;width:1112px;height:710px;background:#3a3a3a"></div>
<div class="a" style="left:321px;top:184px;width:1097px;height:699px;border:1px solid #2c2c2c"></div>
<div class="a" style="left:322px;top:211px;width:1095px;height:1px;background:#2c2c2c"></div>
<div class="a" style="left:333px;top:187px;width:1022px;height:22px;border:1px solid #2a2a2a"></div>
<div class="t" style="left:338px;top:191px;font-size:11.7px;line-height:15px;color:#1a1a1a">Libbey1</div>
<div class="a" style="left:1360px;top:189px;width:18px;height:18px;border:1px solid #333"></div>
<svg class="a" style="left:1362px;top:191px" width="14" height="14"><rect x="3" y="1" width="10" height="9" fill="none" stroke="#111" stroke-width="1.2"/><rect x="1" y="4" width="10" height="9" fill="#3a3a3a" stroke="#111" stroke-width="1.2"/><path d="M3 7 H6 M3 9 H6 M3 11 H6" stroke="#111"/><rect x="7" y="6" width="3" height="6" fill="#111"/></svg>
<div class="a" style="left:1383px;top:189px;width:18px;height:18px;border:1px solid #333"></div>
<svg class="a" style="left:1385px;top:191px" width="14" height="14"><rect x="2" y="2" width="8" height="10" fill="#34404a" stroke="#2a3540"/><path d="M4 11 L12 2" stroke="#2a2a2a" stroke-width="1.5"/></svg>
<div class="a" style="left:347px;top:220px;width:1069px;height:1px;background:#444"></div>
<div class="a" style="left:324px;top:221px;width:22px;height:22px;background:#1e2a38"></div>
<svg class="a" style="left:326px;top:223px" width="16" height="16"><path d="M2 3 L10 8 L9 13 L3 9Z" fill="#0a1a4a"/><path d="M10 8 L13 13 L9 13Z" fill="#000"/></svg>
<svg class="a" style="left:326px;top:249px" width="14" height="14"><path d="M2 12 Q1 6 6 3 L12 2 L10 8 Q7 12 2 12Z" fill="#4a3028" opacity="0.7"/></svg>
<div class="a" style="left:327px;top:268px;width:20px;height:1px;background:#2a2a2a"></div>
<svg class="a" style="left:328px;top:276px" width="10" height="14"><path d="M1 1 H9 V13 H1Z M1 5 H9 M1 9 H9 M5 1 V13" fill="none" stroke="#1c4a1c" stroke-width="1.5"/></svg>
<div class="a" style="left:328px;top:297px;width:8px;height:2px;background:#3a5a2a"></div>
<div class="a" style="left:1416px;top:220px;width:1px;height:663px;background:#2a2a2a"></div>
<svg class="a" style="left:1399px;top:226px" width="15" height="15"><rect x="0.7" y="0.7" width="13.6" height="11" fill="none" stroke="#000" stroke-width="1.3"/><path d="M2.5 2.5 L5.5 2.5 L2.5 5.5Z M12.5 2.5 L9.5 2.5 L12.5 5.5Z M2.5 10 L5.5 10 L2.5 7Z M12.5 10 L9.5 10 L12.5 7Z" fill="#000"/><rect x="4" y="13" width="7" height="1.5" fill="#000"/></svg>
<div class="a" style="left:356px;top:228px;width:1028px;height:54px;border:2px solid #000"></div>
<div class="a" style="left:1371px;top:220px;width:2px;height:9px;background:#000"></div>
<div class="a" style="left:1382px;top:823px;width:20px;height:19px;border:1px solid #2a2a2a"></div>
<svg class="a" style="left:1386px;top:827px" width="12" height="12"><circle cx="6" cy="6" r="5" fill="#1e2a1e" stroke="#2a2a2a"/><circle cx="6" cy="6" r="3" fill="#1a3a1a"/><path d="M4.5 7.5 L7.5 4.5 M5 4.5 H7.5 V7" stroke="#2a4a2a" stroke-width="1"/></svg>
<div class="a" style="left:347px;top:857px;width:1070px;height:26px;background:#080d12"></div>
<div class="a" style="left:322px;top:883px;width:1095px;height:1px;background:#2c2c2c"></div>
<div class="a" style="left:1316px;top:860px;width:48px;height:20px;background:#383838;border:1px solid #2a2a2a"></div>
<div class="t" style="left:1318px;top:863px;font-size:13px;line-height:15px;color:#222">36%</div>
<div class="a" style="left:1349px;top:862px;width:13px;height:16px;border:1px solid #222"></div>
<svg class="a" style="left:1351px;top:864px" width="9" height="12"><path d="M1 4.5 L4.5 1 L8 4.5 M1 7.5 L4.5 11 L8 7.5" fill="none" stroke="#555" stroke-width="1"/></svg>
<svg class="a" style="left:1158px;top:862px" width="16" height="16"><path d="M6 8 V4.5 Q6 1.5 8.5 1.5 Q11 1.5 11 4.5 V6" fill="none" stroke="#555" stroke-width="1.3"/><rect x="2" y="8" width="8" height="6" fill="#3a2e10"/><path d="M3 13 L5 9 M6 13 L8 9" stroke="#6a5010" stroke-width="1"/></svg>
<div class="a" style="left:1181px;top:862px;width:16px;height:16px;border:1px dashed #666"></div><svg class="a" style="left:1180px;top:861px" width="16" height="15"><path d="M8 8 L3.5 13" stroke="#5a4520" stroke-width="2.3" stroke-linecap="round"/><ellipse cx="10" cy="6" rx="4.2" ry="3.8" fill="#2c3a46" stroke="#3a3220" stroke-width="1"/></svg>
<div class="t" style="left:1205px;top:860px;font-size:8.5px;line-height:9px;font-weight:bold;color:#4a4a4a;letter-spacing:-0.3px">100</div><svg class="a" style="left:1205px;top:864px" width="16" height="15"><path d="M8 8 L3.5 13" stroke="#5a4520" stroke-width="2.3" stroke-linecap="round"/><ellipse cx="10" cy="6" rx="4.2" ry="3.8" fill="#2c3a46" stroke="#3a3220" stroke-width="1"/></svg>
<div class="t" style="left:1228px;top:860px;font-size:8.5px;line-height:9px;font-weight:bold;color:#4a4a4a;letter-spacing:-0.3px">ALL</div><svg class="a" style="left:1228px;top:864px" width="16" height="15"><path d="M8 8 L3.5 13" stroke="#5a4520" stroke-width="2.3" stroke-linecap="round"/><ellipse cx="10" cy="6" rx="4.2" ry="3.8" fill="#2c3a46" stroke="#3a3220" stroke-width="1"/></svg>
<div class="a" style="left:1253px;top:864px;width:5px;height:2px;background:#4a4a4a"></div><div class="a" style="left:1260px;top:864px;width:6px;height:2px;background:#4a4a4a"></div><svg class="a" style="left:1248px;top:864px" width="16" height="15"><path d="M8 8 L12.5 13" stroke="#5a4520" stroke-width="2.3" stroke-linecap="round"/><ellipse cx="6" cy="6" rx="4.2" ry="3.8" fill="#2c3a46" stroke="#3a3220" stroke-width="1"/></svg>
<div class="a" style="left:1283px;top:864px;width:6px;height:2px;background:#4a4a4a"></div><svg class="a" style="left:1271px;top:864px" width="16" height="15"><path d="M8 8 L12.5 13" stroke="#5a4520" stroke-width="2.3" stroke-linecap="round"/><ellipse cx="6" cy="6" rx="4.2" ry="3.8" fill="#2c3a46" stroke="#3a3220" stroke-width="1"/></svg>
<svg class="a" style="left:1371px;top:864px" width="16" height="15"><path d="M8 8 L12.5 13" stroke="#5a4520" stroke-width="2.3" stroke-linecap="round"/><ellipse cx="6" cy="6" rx="4.2" ry="3.8" fill="#2c3a46" stroke="#3a3220" stroke-width="1"/></svg><div class="t" style="left:1382px;top:859px;font-size:11px;line-height:11px;font-weight:bold;color:#4a4a4a">+</div>
<svg class="a" style="left:1394px;top:864px" width="16" height="15"><path d="M8 8 L12.5 13" stroke="#5a4520" stroke-width="2.3" stroke-linecap="round"/><ellipse cx="6" cy="6" rx="4.2" ry="3.8" fill="#2c3a46" stroke="#3a3220" stroke-width="1"/></svg><div class="t" style="left:1398px;top:859px;font-size:11px;line-height:11px;font-weight:bold;color:#4a4a4a;letter-spacing:-1px">++</div>

<!-- overlay + dialog -->
<div class="a" style="left:316px;top:306px;width:20px;height:524px;background:#c1cdd5"></div>
<div id="dlg" class="a" style="left:336px;top:229px;width:1042px;height:610px;background:#c1cdd5;border-top:1px solid #a9b3ba"></div>
<div class="a" style="left:336px;top:229px;width:1px;height:77px;background:#a9b3ba"></div>
<div class="t" style="left:358px;top:249px;font-size:16.2px;line-height:20px;color:#444">Settings</div>
<div class="a" style="left:1333px;top:251px;width:18px;height:18px;border:1px solid #999;background:#f0f0f0"></div>
<svg class="a" style="left:1334px;top:252px" width="16" height="16"><circle cx="8" cy="8" r="6.6" fill="#f4f4f4" stroke="#777" stroke-width="0.9"/><circle cx="8" cy="8" r="5.2" fill="none" stroke="#999" stroke-width="0.7"/><circle cx="8" cy="8" r="4" fill="#e01030"/><path d="M6 6 L10 10 M10 6 L6 10" stroke="#fff" stroke-width="1.8"/></svg>
<div class="a" style="left:351px;top:276px;width:51px;height:23px;border:1px solid #a8a8a8;border-bottom:none;background:linear-gradient(#f4f4f4,#e2e2e2)"></div>
<div class="t" style="left:360px;top:281px;font-size:11.7px;line-height:15px;color:#222;letter-spacing:-0.5px">Basics</div>
<div class="a" style="left:401px;top:274px;width:107px;height:26px;border:1px solid #a8a8a8;border-bottom:none;background:#fff"></div>
<div class="t" style="left:410px;top:281px;font-size:11.7px;line-height:15px;color:#222">Packout Settings</div>
<div class="a" style="left:348px;top:298px;width:1018px;height:497px;border:1px solid #a8a8a8;border-top:1px solid #a8a8a8;background:#fff"></div>
<div class="a" style="left:402px;top:298px;width:105px;height:1px;background:#fff"></div>
<!-- scrollbar -->
<div class="a" style="left:1347px;top:301px;width:17px;height:491px;background:#f0f0f0"></div>
<div class="a" style="left:1347px;top:333px;width:17px;height:372px;background:#c2c2c2"></div>
<svg class="a" style="left:1350px;top:305px" width="11" height="8"><path d="M1 6.5 L5.5 2 L10 6.5" fill="none" stroke="#666" stroke-width="1.5"/></svg>
<svg class="a" style="left:1350px;top:780px" width="11" height="8"><path d="M1 1.5 L5.5 6 L10 1.5" fill="none" stroke="#666" stroke-width="1.5"/></svg>
<div class="t" style="left:373px;top:305px;font-size:16.2px;line-height:20px;color:#6a6a6a">Packout By</div>
<div class="t" style="left:383px;top:341px;font-size:11.1px;line-height:15px;color:#222">Box Type:</div>
<div class="a" style="left:483px;top:336px;width:851px;height:22px;border:1px solid #a8a8a8;background:#fff"></div>
<div class="t" style="left:488px;top:340px;font-size:11.7px;line-height:15px;color:#222">SCC 123</div>
<div class="a" style="left:1317px;top:338px;width:15px;height:18px;border:1px solid #a8a8a8;background:#e8e8e8"></div>
<svg class="a" style="left:1320px;top:344px" width="9" height="6"><path d="M0.5 0.5 L4.5 4.5 L8.5 0.5" fill="none" stroke="#444" stroke-width="1.2"/></svg>
<div class="t" style="left:373px;top:377px;font-size:15.8px;line-height:20px;color:#6a6a6a">Packing List:</div>
<!-- table toolbar -->
<div class="a" style="left:383px;top:405px;width:18px;height:18px;border:1px solid #888;background:#e8e8e8"></div>
<svg class="a" style="left:384px;top:406px" width="16" height="16"><path d="M2 5 L8 2 L14 5 V11 L8 14 L2 11Z M2 5 L8 8 L14 5 M8 8 V14" fill="none" stroke="#111" stroke-width="1.3"/><circle cx="11" cy="11" r="3" fill="#e8e8e8" stroke="#111" stroke-width="1.2"/><path d="M13 13 L15 15" stroke="#111" stroke-width="1.5"/></svg>
<div class="a" style="left:405px;top:405px;width:18px;height:18px;border:1px solid #ccc;background:#eee"></div>
<svg class="a" style="left:407px;top:407px" width="14" height="14"><rect x="1" y="1" width="10" height="12" fill="none" stroke="#aaa"/><path d="M3 4 H7 M3 7 H7 M3 10 H7 M8 4 L9 5 L11 2 M8 7 L9 8 L11 5 M8 10 L9 11 L11 8" stroke="#aaa" fill="none"/></svg>
<div class="a" style="left:427px;top:405px;width:18px;height:18px;border:1px solid #888;background:#e8e8e8"></div>
<svg class="a" style="left:428px;top:406px" width="16" height="16"><path d="M2 5 L8 2 L14 5 V11 L8 14 L2 11Z M2 5 L8 8 L14 5 M8 8 V14" fill="none" stroke="#111" stroke-width="1.3"/><circle cx="11.5" cy="11.5" r="3.3" fill="#111"/><path d="M9.8 11.5 H13.2" stroke="#fff" stroke-width="1.2"/></svg>
<!-- table -->
<div class="a" style="left:383px;top:427px;width:951px;height:200px;border:1px solid #d4d4d4;background:#fff"></div>
<div class="a" style="left:384px;top:510px;width:949px;height:26px;background:#b3d7f1"></div>
<div class="a" style="left:574px;top:510px;width:119px;height:26px;background:#f0f0f0"></div>
<div class="a" style="left:384px;top:482px;width:949px;height:1px;background:#d8d8d8"></div>
<div class="a" style="left:384px;top:509px;width:949px;height:1px;background:#d8d8d8"></div>
<div class="a" style="left:384px;top:536px;width:949px;height:1px;background:#d8d8d8"></div>
<div class="a" style="left:473px;top:428px;width:1px;height:108px;background:#d8d8d8"></div>
<div class="a" style="left:573px;top:428px;width:1px;height:108px;background:#d8d8d8"></div>
<div class="a" style="left:693px;top:428px;width:1px;height:108px;background:#d8d8d8"></div>
<div class="a" style="left:784px;top:428px;width:1px;height:108px;background:#d8d8d8"></div>
<div class="a" style="left:837px;top:428px;width:1px;height:108px;background:#d8d8d8"></div>
<div class="a" style="left:906px;top:428px;width:1px;height:108px;background:#d8d8d8"></div>
<div class="a" style="left:996px;top:428px;width:1px;height:108px;background:#d8d8d8"></div>
<div class="a" style="left:1087px;top:428px;width:1px;height:108px;background:#d8d8d8"></div>
<div class="a" style="left:1177px;top:428px;width:1px;height:108px;background:#d8d8d8"></div>
<div class="a" style="left:1241px;top:428px;width:1px;height:108px;background:#d8d8d8"></div>
<div class="t" style="left:388px;top:448px;font-size:11.7px;line-height:15px;color:#333">Name</div>
<div class="t" style="left:478px;top:448px;font-size:11.7px;line-height:15px;color:#333">Revision</div>
<div class="t" style="left:578px;top:448px;font-size:11.7px;line-height:15px;color:#333">Revision Mode</div>
<div class="t" style="left:698px;top:448px;font-size:11.7px;line-height:15px;color:#333">Description</div>
<div class="t" style="left:789px;top:448px;font-size:11.7px;line-height:15px;color:#333">Quant...</div>
<div class="t" style="left:842px;top:448px;font-size:11.7px;line-height:15px;color:#333">Unit of Is...</div>
<div class="t" style="left:911px;top:448px;font-size:11.7px;line-height:15px;color:#333">Verification...</div>
<div class="t" style="left:1182px;top:448px;font-size:11.7px;line-height:15px;color:#333">No Faile...</div>
<div class="t" style="left:1246px;top:448px;font-size:11.7px;line-height:15px;color:#333">Process Valid...</div>
<div class="t" style="left:1001px;top:432px;font-size:11.7px;line-height:16px;color:#333">Has No<br>Unresolved<br>Defects</div>
<div class="t" style="left:1092px;top:432px;font-size:11.7px;line-height:16px;color:#333">Has No<br>Unresolved<br>Symptoms</div>
<svg class="a" style="left:679px;top:452px" width="11" height="6"><path d="M0 6 L5.5 0.5 L11 6Z" fill="#555"/></svg>
<div class="t" style="left:388px;top:489px;font-size:11.7px;line-height:15px;color:#222">56 - 1</div>
<div class="t" style="left:576px;top:489px;font-size:11.7px;line-height:15px;color:#222">Use Specific</div>
<div class="t" style="left:790px;top:489px;font-size:11.7px;line-height:15px;color:#222">1</div>
<div class="t" style="left:842px;top:489px;font-size:11.7px;line-height:15px;color:#222">Pieces</div>
<div class="t" style="left:912px;top:489px;font-size:11.7px;line-height:15px;color:#222">Acknowledge</div>
<div class="t" style="left:1247px;top:487px;font-size:11.7px;line-height:15px;color:#222">Completed A...</div>
<div class="t" style="left:388px;top:516px;font-size:11.7px;line-height:15px;color:#222">From Parts List</div>
<div class="t" style="left:479px;top:516px;font-size:11.7px;line-height:15px;color:#222">From Parts List</div>
<div class="t" style="left:576px;top:516px;font-size:11.7px;line-height:15px;color:#222">Use Specific</div>
<div class="t" style="left:698px;top:516px;font-size:11.7px;line-height:15px;color:#222">From Parts List</div>
<div class="t" style="left:842px;top:516px;font-size:11.7px;line-height:15px;color:#222">From Par...</div>
<div class="t" style="left:912px;top:516px;font-size:11.7px;line-height:15px;color:#222">Scan UID</div>
<div class="t" style="left:1247px;top:514px;font-size:11.7px;line-height:15px;color:#222">No Validation</div>
<div class="t" style="left:790px;top:516px;width:46px;overflow:hidden;font-size:11.7px;line-height:15px;color:#222">From Parts</div>
<div class="a" style="left:1036px;top:490px;width:13px;height:13px;border:1px solid #707070;background:#fff"></div>
<div class="a" style="left:1036px;top:517px;width:13px;height:13px;border:1px solid #707070;background:#fff"></div>
<div class="a" style="left:1126px;top:490px;width:13px;height:13px;border:1px solid #707070;background:#fff"></div>
<div class="a" style="left:1126px;top:517px;width:13px;height:13px;border:1px solid #707070;background:#fff"></div>
<div class="a" style="left:1203px;top:490px;width:13px;height:13px;border:1px solid #707070;background:#fff"></div>
<div class="a" style="left:1203px;top:517px;width:13px;height:13px;border:1px solid #707070;background:#fff"></div>
<div class="t" style="left:373px;top:644px;font-size:16.3px;line-height:20px;color:#6a6a6a">Labeling</div>
<div class="t" style="left:383px;top:678px;font-size:11.7px;line-height:15px;color:#222">Label Template:</div>
<div class="a" style="left:483px;top:674px;width:806px;height:22px;border:1px solid #a8a8a8;background:#fff"></div>
<div class="a" style="left:1272px;top:676px;width:15px;height:18px;border:1px solid #a8a8a8;background:#e8e8e8"></div>
<svg class="a" style="left:1275px;top:682px" width="9" height="6"><path d="M0.5 0.5 L4.5 4.5 L8.5 0.5" fill="none" stroke="#444" stroke-width="1.2"/></svg>
<div class="a" style="left:1294px;top:675px;width:40px;height:21px;border:1px solid #ccc;background:#f2f2f2"></div>
<svg class="a" style="left:1307px;top:678px" width="14" height="14"><circle cx="7" cy="7" r="6" fill="#e4f0e4" stroke="#c8c8c8"/><path d="M7 4 V10 M4 7 H10" stroke="#b8dcb8" stroke-width="1.8"/></svg>
<div class="t" style="left:373px;top:714px;font-size:17px;line-height:20px;color:#6a6a6a">Options</div>
<div class="t" style="left:383px;top:747px;font-size:11.7px;line-height:15px;color:#222">Batch Restrictions:</div>
<div class="a" style="left:483px;top:743px;width:250px;height:22px;border:1px solid #a8a8a8;background:#fff"></div>
<div class="t" style="left:488px;top:747px;font-size:12px;line-height:15px;color:#222">Allow units from any batch to be packed</div>
<div class="a" style="left:716px;top:745px;width:15px;height:18px;border:1px solid #a8a8a8;background:#e8e8e8"></div>
<svg class="a" style="left:719px;top:751px" width="9" height="6"><path d="M0.5 0.5 L4.5 4.5 L8.5 0.5" fill="none" stroke="#444" stroke-width="1.2"/></svg>
<div class="a" style="left:383px;top:774px;width:13px;height:13px;border:1px solid #707070;background:#fff"></div>
<div class="t" style="left:400px;top:773px;font-size:11.7px;line-height:15px;color:#222">Force Complete Boxes:</div>
<div class="a" style="left:1288px;top:807px;width:75px;height:22px;border:1px solid #a0a0a0;background:linear-gradient(#f6f6f6,#e4e4e4)"></div>
<div class="t" style="left:1288px;top:811px;width:75px;text-align:center;font-size:12.5px;line-height:15px;color:#222">OK</div>
<!-- TITLE BAR -->
<div id="title" class="a" style="left:0;top:0;width:1445px;height:50px;background:#1b2d3c"></div>
<div class="a" style="left:7px;top:7px;width:39px;height:38px;background:#2261ad"></div>
<svg class="a" style="left:7px;top:7px" width="39" height="38"><path d="M8 33 V16.5 Q8 9 15 9 H18 Q25 9 25 16.5 V33" fill="none" stroke="#fff" stroke-width="4"/></svg>
<div class="t" style="left:50px;top:13px;font-size:23px;line-height:28px;color:#d4d9de;letter-spacing:1.9px">Factory</div>
<div class="t" style="left:143px;top:13px;font-size:23px;line-height:28px;color:#fff;letter-spacing:2.1px;text-shadow:0.35px 0 0 #fff">Logix</div>
<div class="t" style="left:210px;top:14px;font-size:5px;color:#889">TM</div>
<!-- home -->
<svg class="a" style="left:226px;top:8px" width="40" height="34"><rect x="25.1" y="5.8" width="4.9" height="9" fill="#fff"/><path d="M25 9 L33.6 15 V17 L25 11Z" fill="#1b2d3c"/><path d="M4.5 18.6 L19 8.8 L33.6 18.6" fill="none" stroke="#fff" stroke-width="3.3"/><path d="M7.9 19.8 L19 12.3 L30.1 19.8 V30 H22.1 V21.3 Q22.1 18.6 19.05 18.6 Q16 18.6 16 21.3 V30 H7.9Z" fill="#fff"/></svg>
<!-- selected grid -->
<div class="a" style="left:272px;top:1px;width:44px;height:49px;background:#f6f7fa"></div>
<svg class="a" style="left:279px;top:12px" width="32" height="27"><g fill="#1b2d3c"><rect x="0.5" y="1" width="6.2" height="5"/><rect x="8.9" y="1" width="5.9" height="5"/><rect x="16.8" y="1" width="6.2" height="5"/><rect x="0.5" y="8" width="6.2" height="4.6"/><rect x="8.9" y="8" width="5.9" height="4.6"/><rect x="16.8" y="8" width="6.2" height="4.6"/><rect x="0.5" y="14.2" width="6.2" height="4.6"/><rect x="8.9" y="14.2" width="5.9" height="4.6"/><rect x="16.8" y="14.2" width="6.2" height="4.6"/><rect x="0.5" y="20.8" width="6.2" height="4.6"/><rect x="8.9" y="20.8" width="5.9" height="4.6"/><rect x="16.8" y="20.8" width="6.2" height="4.6"/></g><path d="M11.5 25.5 L13 20 L26 7 L30 11 L17 24 Z" fill="#1b2d3c" stroke="#f6f7fa" stroke-width="1.6"/><path d="M24.5 8.5 L28.5 12.5" stroke="#f6f7fa" stroke-width="1.2"/></svg>
<!-- db arrow -->
<svg class="a" style="left:329px;top:10px" width="26" height="31"><path d="M4 3.5 Q4 0.5 14 0.5 Q24 0.5 24 3.5 V26.5 Q24 29.5 14 29.5 Q4 29.5 4 26.5 Z" fill="#fff"/><path d="M4 14.5 Q8 15.5 14 16 Q20 15.5 24 13.5 M4 20.5 Q14 24 24 20.5" fill="none" stroke="#1b2d3c" stroke-width="1.3"/><path d="M0 3.5 L5 3 Q10 5 13 7.5 L16 3.5 L17.5 16 L5 13.5 L9.5 11 Q7 8 4 7.5 L1.5 7.5Z" fill="#fff" stroke="#1b2d3c" stroke-width="1.3"/></svg>
<!-- circle arrows -->
<svg class="a" style="left:376px;top:10px" width="30" height="30"><circle cx="15.3" cy="15" r="14.5" fill="#fff"/><path d="M15.3 2.3 A12.7 12.7 0 0 1 15.3 27.7 Z" fill="#1b2d3c"/><path d="M4.2 15 L11.5 8.7 V13 H15.3 V17 H11.5 V21.3 Z" fill="#1b2d3c"/><path d="M15.3 12.8 H18.8 V8.7 L26.2 15 L18.8 21.3 V17.4 H15.3 Z" fill="#fff"/></svg>
<!-- windows -->
<svg class="a" style="left:424px;top:10px" width="30" height="30"><rect x="5.5" y="0.5" width="24" height="21.5" rx="1.5" fill="#fff"/><rect x="7.5" y="4.5" width="20" height="15.5" fill="#1b2d3c"/><rect x="20" y="1.7" width="1.6" height="1.6" fill="#1b2d3c"/><rect x="22.7" y="1.7" width="1.6" height="1.6" fill="#1b2d3c"/><rect x="25.4" y="1.7" width="1.6" height="1.6" fill="#1b2d3c"/><rect x="0" y="7" width="27.5" height="23.5" rx="2" fill="#1b2d3c"/><rect x="0.5" y="7.8" width="26" height="21.7" rx="1.5" fill="#fff"/><rect x="2.5" y="11.5" width="22" height="16" fill="#1b2d3c"/><rect x="15" y="9" width="1.6" height="1.6" fill="#1b2d3c"/><rect x="17.7" y="9" width="1.6" height="1.6" fill="#1b2d3c"/><rect x="20.4" y="9" width="1.6" height="1.6" fill="#1b2d3c"/><rect x="4.5" y="13.5" width="8" height="1.8" fill="#fff"/><rect x="4.5" y="17" width="8" height="1.8" fill="#fff"/><rect x="4.5" y="20.5" width="8" height="1.8" fill="#fff"/><rect x="4.5" y="24" width="8" height="1.8" fill="#fff"/><rect x="14.5" y="13.5" width="8" height="12.3" fill="#fff"/></svg>
<!-- gear -->
<svg class="a" style="left:472px;top:10px" width="30" height="30" viewBox="-15 -15 30 30"><g fill="#fff"><circle r="10.8"/><g><path d="M-2.6 -14.5 H2.6 L3.2 -9 H-3.2Z"/><path d="M-2.6 -14.5 H2.6 L3.2 -9 H-3.2Z" transform="rotate(45)"/><path d="M-2.6 -14.5 H2.6 L3.2 -9 H-3.2Z" transform="rotate(90)"/><path d="M-2.6 -14.5 H2.6 L3.2 -9 H-3.2Z" transform="rotate(135)"/><path d="M-2.6 -14.5 H2.6 L3.2 -9 H-3.2Z" transform="rotate(180)"/><path d="M-2.6 -14.5 H2.6 L3.2 -9 H-3.2Z" transform="rotate(225)"/><path d="M-2.6 -14.5 H2.6 L3.2 -9 H-3.2Z" transform="rotate(270)"/><path d="M-2.6 -14.5 H2.6 L3.2 -9 H-3.2Z" transform="rotate(315)"/></g></g><circle r="5.4" fill="#1b2d3c"/></svg>
<div class="a" style="left:515px;top:8px;width:1px;height:35px;background:#f0f0f0"></div><div class="a" style="left:516px;top:8px;width:1px;height:35px;background:#7a8690"></div>
<!-- floppy -->
<svg class="a" style="left:535px;top:12px" width="27" height="27"><path d="M0 1.5 Q0 0 1.5 0 H21 L26 5 V25 Q26 26 25 26 H1.5 Q0 26 0 24.5 Z" fill="#fff"/><rect x="5" y="2.5" width="15" height="8" fill="#1b2d3c"/><rect x="15" y="3.5" width="3" height="6" fill="#fff"/><rect x="5" y="14.5" width="16" height="9.5" fill="#1b2d3c"/></svg>
<!-- back/fwd -->
<svg class="a" style="left:583px;top:10px" width="30" height="30"><circle cx="15" cy="15.2" r="14.4" fill="#5b6b77"/><path d="M5 15.5 L17.5 8 V12.5 H23 V18.5 H17.5 V23 Z" fill="#1b2d3c"/></svg>
<svg class="a" style="left:633px;top:10px" width="30" height="30"><circle cx="15" cy="15.2" r="14.4" fill="#5b6b77"/><path d="M25 15.5 L12.5 8 V12.5 H7 V18.5 H12.5 V23 Z" fill="#1b2d3c"/></svg>
<!-- unlock -->
<svg class="a" style="left:686px;top:10px" width="26" height="30"><path d="M5.5 8.5 Q5.5 2 12.5 2 Q19.5 2 19.5 8.5 V13" fill="none" stroke="#5b6b77" stroke-width="3.2"/><rect x="0" y="12.5" width="24.5" height="16.2" fill="#5b6b77"/><circle cx="12.3" cy="18.5" r="2.4" fill="#1b2d3c"/><rect x="11.3" y="18.5" width="2" height="5.5" fill="#1b2d3c"/></svg>
<!-- lock x -->
<svg class="a" style="left:735px;top:10px" width="26" height="30"><path d="M6 13 V9 Q6 2.5 12.8 2.5 Q19.5 2.5 19.5 9 V13" fill="none" stroke="#fff" stroke-width="3.3"/><rect x="0.7" y="11.6" width="24.3" height="17.2" fill="#fff"/><path d="M8.8 16.5 L16.8 24.5 M16.8 16.5 L8.8 24.5" stroke="#1b2d3c" stroke-width="2.6"/></svg>
<!-- hierarchy search -->
<svg class="a" style="left:782px;top:10px" width="32" height="31"><rect x="10.7" y="0.8" width="8" height="6.2" fill="#fff"/><rect x="10.7" y="8" width="8" height="7.2" fill="#fff"/><path d="M14.7 15 V20" stroke="#fff" stroke-width="1.5"/><rect x="0.8" y="22.4" width="8.2" height="7.2" fill="#fff"/><rect x="9" y="19.7" width="7" height="9.9" fill="#fff"/><path d="M5 22.4 V19.5 H16" stroke="#fff" stroke-width="1.3" fill="none"/><circle cx="22.4" cy="23" r="5.8" fill="#1b2d3c" stroke="#fff" stroke-width="2"/><path d="M26.5 27 L30.5 30.5" stroke="#fff" stroke-width="2.5"/></svg>
<div class="a" style="left:828px;top:8px;width:1px;height:35px;background:#f0f0f0"></div><div class="a" style="left:829px;top:8px;width:1px;height:35px;background:#7a8690"></div>
<div class="t" style="left:849px;top:2px;font-size:11px;line-height:14px;color:#fff;font-weight:bold;letter-spacing:-0.4px">Assembly:</div>
<div class="t" style="left:849px;top:17px;font-size:11px;line-height:14px;color:#fff;font-weight:bold;letter-spacing:-0.4px">Process Rev:</div>
<div class="t" style="left:849px;top:32px;font-size:11px;line-height:14px;color:#fff;font-weight:bold;letter-spacing:-0.4px">Release Status:</div>
<div class="t" style="left:929px;top:2px;font-size:11px;line-height:14px;color:#fff">56 - 1</div>
<div class="t" style="left:929px;top:17px;font-size:11px;line-height:14px;color:#fff">2</div>
<div class="t" style="left:929px;top:32px;font-size:11px;line-height:14px;color:#fff">Under Construction</div>
<!-- user x -->
<svg class="a" style="left:1320px;top:12px" width="30" height="30"><ellipse cx="12.5" cy="8" rx="5.5" ry="7" fill="#fff"/><path d="M0 28 Q0 18 7 15.5 Q12.5 19 18 15.5 Q22 17 24 20 L20 28 Z" fill="#fff"/><circle cx="20.5" cy="22" r="6.8" fill="#fff" stroke="#1b2d3c" stroke-width="1.3"/><path d="M17.7 19.2 L23.3 24.8 M23.3 19.2 L17.7 24.8" stroke="#1b2d3c" stroke-width="2"/></svg>
<div class="a" style="left:1370px;top:35px;width:8px;height:2px;background:#ddd"></div>
<div class="a" style="left:1389px;top:28px;width:10px;height:9px;border:1px solid #ccc;border-top-width:2px"></div>
<svg class="a" style="left:1409px;top:27px" width="11" height="11"><path d="M1.5 1.5 L9.5 9.5 M9.5 1.5 L1.5 9.5" stroke="#ccc" stroke-width="1.3"/></svg>
</body></html>
